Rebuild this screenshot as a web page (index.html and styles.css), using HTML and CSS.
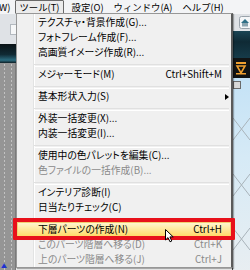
FILE: index.html
```html
<!DOCTYPE html>
<html lang="ja">
<head>
    <meta charset="UTF-8">
    <title>ツール メニュー</title>
    <link rel="stylesheet" href="styles.css">
</head>
<body>

    <div class="app">
        <div class="menubar">
            <span class="mb-item cut">W)</span>
            <span class="mb-item open">ツール(T)</span>
            <span class="mb-item">設定(O)</span>
            <span class="mb-item">ウィンドウ(A)</span>
            <span class="mb-item">ヘルプ(H)</span>
        </div>

        <div class="work">
            <div class="side-left">
                <div class="toolbar"><span class="tool-btn"></span></div>
                <div class="band"></div>
                <div class="grid-panel"><span class="marker">▲</span></div>
            </div>
            <div class="center"></div>
            <div class="side-right">
                <div class="toolbar">
                    <svg class="home-btn" width="11" height="13" viewBox="0 0 11 13">
                        <rect x="0.5" y="0.5" width="12" height="12" rx="2" fill="#f4f6f8" stroke="#9aa3ab"/>
                        <path d="M2 7 L6 3 L10 7 Z" fill="#2f6f86"/>
                        <rect x="3" y="7" width="6" height="3.5" fill="#8aa4b0"/>
                    </svg>
                </div>
                <div class="band"></div>
                <div class="dark">
                    <svg width="12" height="14" viewBox="0 0 12 14">
                        <rect x="1" y="1" width="10" height="2" fill="#f0a030"/>
                        <path d="M2 5 L10 5 L6 12 Z" fill="none" stroke="#f0a030" stroke-width="1.6"/>
                        <rect x="1" y="12" width="10" height="1.5" fill="#f0a030"/>
                    </svg>
                </div>
                <div class="sky">
                    <span class="mini-btn"></span>
                    <svg class="sky-lines" width="17" height="200" viewBox="0 0 17 200">
                        <path d="M0 40 L17 62 M17 40 L0 62 M0 96 L17 118 M17 96 L0 118 M0 150 L17 172 M17 150 L0 172" stroke="#a9b3ba" stroke-width="1" fill="none"/>
                    </svg>
                </div>
            </div>
        </div>

        <ul class="menu">
            <li class="item">テクスチャ・背景作成(G)...</li>
            <li class="item">フォトフレーム作成(F)...</li>
            <li class="item">高画質イメージ作成(R)...</li>
            <li class="sep"></li>
            <li class="item">メジャーモード(M)<span class="key">Ctrl+Shift+M</span></li>
            <li class="sep"></li>
            <li class="item">基本形状入力(S)<span class="arrow"></span></li>
            <li class="sep"></li>
            <li class="item">外装一括変更(X)...</li>
            <li class="item">内装一括変更(I)...</li>
            <li class="sep"></li>
            <li class="item">使用中の色パレットを編集(C)...</li>
            <li class="item disabled">色ファイルの一括作成(B)...</li>
            <li class="sep"></li>
            <li class="item">インテリア診断(I)</li>
            <li class="item">日当たりチェック(C)</li>
            <li class="sep"></li>
            <li class="item active">下層パーツの作成(N)<span class="key">Ctrl+H</span></li>
            <li class="item disabled">このパーツ階層へ移る(D)<span class="key">Ctrl+K</span></li>
            <li class="item disabled">上のパーツ階層へ移る(J)<span class="key">Ctrl+J</span></li>
        </ul>

        <div class="callout"></div>

        <svg class="cursor" width="10" height="14" viewBox="0 0 10 14">
            <path d="M0.5 0.5 L0.5 11 L3 8.6 L5 12.8 L6.8 12 L4.9 7.9 L8.2 7.9 Z" fill="#fff" stroke="#000" stroke-width="1" stroke-linejoin="round"/>
        </svg>
    </div>

</body>
</html>
```

FILE: styles.css
```css
html, body {
    margin: 0;
    padding: 0;
}

body {
    width: 250px;
    height: 270px;
    overflow: hidden;
    font-family: "Noto Sans CJK JP", "Noto Sans", sans-serif;
    font-size: 9.8px;
    font-feature-settings: "palt";
    color: #000;
}

.app {
    position: relative;
    width: 250px;
    height: 270px;
    display: flex;
    flex-direction: column;
    background: #f0f0f0;
}

/* menu bar */
.menubar {
    height: 14px;
    display: flex;
    align-items: center;
    gap: 10px;
    background: #f3f4f6;
    white-space: nowrap;
    font-size: 9.4px;
    font-feature-settings: normal;
}

.mb-item {
    line-height: 12px;
}

.mb-item.cut {
    margin-left: -1px;
    margin-right: -5px;
}

.mb-item.open {
    border: 1px solid #6a6a6a;
    border-radius: 1px;
    background: #ececec;
    padding: 0 3px;
    margin-right: -2px;
}

/* app panes behind the menu */
.work {
    flex: 1;
    display: flex;
}

.side-left {
    width: 16px;
    display: flex;
    flex-direction: column;
}

.side-left .toolbar {
    height: 30px;
    background: #dfe2e6;
    display: flex;
    align-items: center;
    justify-content: flex-end;
}

.tool-btn {
    width: 5px;
    height: 9px;
    background: #f6f7f8;
    border: 1px solid #b3b9bf;
    border-right: none;
}

.side-left .band {
    height: 19px;
    background: linear-gradient(#0a1216 0%, #102a34 55%, #2b6c80 85%, #0d1e24 100%);
}

.grid-panel {
    flex: 1;
    position: relative;
    background-color: #959595;
    background-image:
        radial-gradient(circle, #c2c2c2 0.6px, transparent 0.9px);
    background-size: 7px 4px;
    background-position: 1px 0;
    border-right: 1px solid #7a7a7a;
}

.marker {
    position: absolute;
    left: 1px;
    bottom: 9px;
    font-size: 6px;
    line-height: 6px;
    color: #2030d0;
}

.center {
    flex: 1;
    background: #f0f0f0;
}

.side-right {
    width: 17px;
    display: flex;
    flex-direction: column;
    border-left: 1px solid #4a4a4a;
}

.side-right .toolbar {
    height: 17px;
    background: #dfe2e6;
    display: flex;
    align-items: center;
    justify-content: flex-end;
}

.home-btn {
    display: block;
}

.side-right .band {
    height: 27px;
    background: linear-gradient(#1a4454 0%, #0f2a35 40%, #163b49 100%);
}

.side-right .dark {
    height: 20px;
    background: #121414;
    display: flex;
    align-items: center;
    padding-left: 2px;
}

.sky {
    flex: 1;
    position: relative;
    background: linear-gradient(#c4e2f6 0%, #d6eaf6 40%, #e9eef1 100%);
}

.mini-btn {
    position: absolute;
    left: 0;
    top: 3px;
    width: 6px;
    height: 6px;
    background: #d8d8d8;
    border: 1px solid #6b6b6b;
}

.sky-lines {
    display: block;
}

/* dropdown */
.menu {
    position: absolute;
    left: 16px;
    top: 13px;
    width: 214px;
    margin: 0;
    padding: 1px 0 0;
    list-style: none;
    background-color: #f0f0f0;
    background-image: linear-gradient(to right, transparent 16px, #e2e3e3 16px, #e2e3e3 17px, #fff 17px, #fff 18px, transparent 18px);
    border: 1px solid #979797;
    border-right: 2px solid #5a5a5a;
    box-shadow: 1px 1px 1px rgba(0, 0, 0, 0.3);
    white-space: nowrap;
}

.item {
    height: 15px;
    display: grid;
    grid-template-columns: 1fr auto 9px;
    align-items: center;
    padding-left: 21px;
    line-height: 15px;
}

.key {
    grid-column: 2;
}

.arrow {
    grid-column: 3;
    justify-self: center;
    width: 0;
    height: 0;
    border-top: 3.5px solid transparent;
    border-bottom: 3.5px solid transparent;
    border-left: 4px solid #000;
}

.item.disabled {
    color: #8a8a8a;
}

.item.active {
    background: linear-gradient(#fff7d6 0%, #ffe9a0 45%, #ffd862 100%);
    box-shadow: inset 0 0 0 1px #f2cf72;
}

.sep {
    height: 7px;
    margin-left: 17px;
    margin-right: 2px;
    box-sizing: border-box;
    border-bottom: 1px solid #fff;
    background: linear-gradient(transparent 4px, #e0e0e0 4px, #e0e0e0 5px, transparent 5px);
}

/* annotation */
.callout {
    position: absolute;
    left: 13px;
    top: 218px;
    width: 214px;
    height: 14px;
    border: 4px solid #e8101a;
    border-radius: 1px;
}

.cursor {
    position: absolute;
    left: 165px;
    top: 229px;
}
```
